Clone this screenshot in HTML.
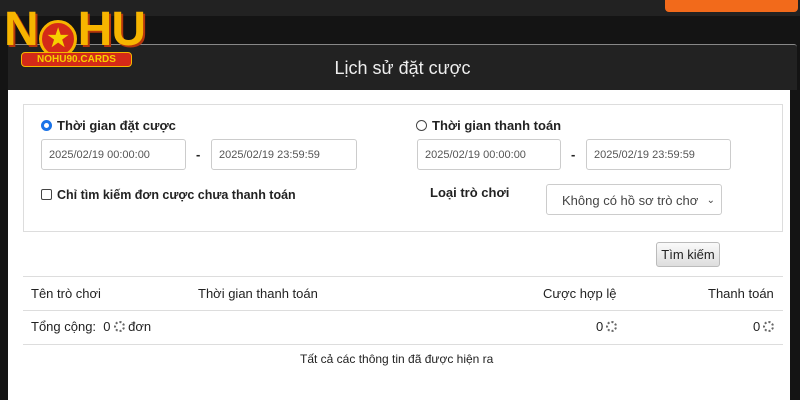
<!DOCTYPE html>
<html><head><meta charset="utf-8"><style>
*{margin:0;padding:0;box-sizing:border-box}
body{width:800px;height:400px;overflow:hidden;background:#141414;font-family:"Liberation Sans",Arial,sans-serif;position:relative}
.top{position:absolute;left:0;top:0;width:800px;height:16px;background:#222}
.orange{position:absolute;left:665px;top:-6px;width:133px;height:18px;background:#f26a1b;border-radius:4px}
.hdr{position:absolute;left:8px;top:44px;width:789px;height:46px;background:#222;border-top:1px solid #888;border-radius:3px 3px 0 0;color:#eee;font-size:18px;text-align:center;line-height:46px}
.bodyw{position:absolute;left:8px;top:90px;width:782px;height:310px;background:#fff}
.fs{position:absolute;left:23px;top:104px;width:760px;height:128px;border:1px solid #ddd}
.a{position:absolute;font-size:13px;color:#222}
.b{font-weight:bold}
.in{position:absolute;height:31px;border:1px solid #ccc;border-radius:3px;font-size:11px;color:#555;line-height:31px;padding-left:7px;background:#fff}
.line{position:absolute;left:23px;width:760px;height:1px;background:#ddd}
.spin{display:inline-block;width:11px;height:11px;border:2px dotted #666;border-radius:50%;vertical-align:-1px;margin-left:3px}
</style></head><body>
<div class="top"></div>
<div class="orange"></div>
<div class="hdr">Lịch sử đặt cược</div>
<div class="bodyw"></div>
<div class="fs"></div>
<div class="a b" style="left:41px;top:118px"><span style="display:inline-block;width:11px;height:11px;border-radius:50%;border:3px solid #1a73e8;background:#fff;vertical-align:-1px;margin-right:5px"></span>Thời gian đặt cược</div>
<div class="in" style="left:41px;top:139px;width:145px">2025/02/19 00:00:00</div>
<div class="a b" style="left:196px;top:147px">-</div>
<div class="in" style="left:211px;top:139px;width:146px">2025/02/19 23:59:59</div>
<div class="a b" style="left:41px;top:188px;font-size:12.5px"><span style="display:inline-block;width:11px;height:11px;border:1px solid #444;border-radius:2px;vertical-align:-1px;margin-right:5px"></span>Chỉ tìm kiếm đơn cược chưa thanh toán</div>
<div class="a b" style="left:416px;top:118px"><span style="display:inline-block;width:11px;height:11px;border-radius:50%;border:1px solid #444;vertical-align:-1px;margin-right:5px"></span>Thời gian thanh toán</div>
<div class="in" style="left:417px;top:139px;width:144px">2025/02/19 00:00:00</div>
<div class="a b" style="left:571px;top:147px">-</div>
<div class="in" style="left:586px;top:139px;width:145px">2025/02/19 23:59:59</div>
<div class="a b" style="left:430px;top:185px">Loại trò chơi</div>
<div class="in" style="left:546px;top:184px;width:176px;font-size:13px;color:#444;padding-left:15px">Không có hồ sơ trò chơ<span style="position:absolute;right:6px;font-size:10px">&#8964;</span></div>
<div style="position:absolute;left:656px;top:242px;width:64px;height:25px;border:1px solid #bbb;border-radius:3px;background:linear-gradient(#fafafa,#ddd);font-size:13px;color:#222;text-align:center;line-height:23px">Tìm kiếm</div>
<div class="line" style="top:276px"></div>
<div class="line" style="top:310px"></div>
<div class="line" style="top:344px"></div>
<div class="a" style="left:31px;top:286px">Tên trò chơi</div>
<div class="a" style="left:198px;top:286px">Thời gian thanh toán</div>
<div class="a" style="left:543px;top:286px">Cược hợp lệ</div>
<div class="a" style="left:708px;top:286px">Thanh toán</div>
<div class="a" style="left:31px;top:319px">Tổng cộng:&nbsp; 0<span class="spin"></span> đơn</div>
<div class="a" style="left:596px;top:319px">0<span class="spin"></span></div>
<div class="a" style="left:753px;top:319px">0<span class="spin"></span></div>
<div class="a" style="left:300px;top:352px;font-size:12px">Tất cả các thông tin đã được hiện ra</div>
<div style="position:absolute;left:4px;top:2px;font:900 48px 'Liberation Sans',sans-serif;color:#f7b500;letter-spacing:-1px;text-shadow:2px 2px 0 #b5360b;white-space:nowrap">N<span style="display:inline-block;width:38px;height:38px;border-radius:50%;background:#d42a18;border:3px solid #f7b500;vertical-align:-1px;color:#f7d000;font-size:24px;text-align:center;line-height:32px;text-shadow:none;margin:0 1px">★</span>HU</div>
<div style="position:absolute;left:21px;top:52px;width:111px;height:15px;background:#d42a18;border:1px solid #f7b500;border-radius:4px;font:900 10px 'Liberation Sans',sans-serif;color:#f7d000;text-align:center;line-height:13px">NOHU90.CARDS</div>
</body></html>
